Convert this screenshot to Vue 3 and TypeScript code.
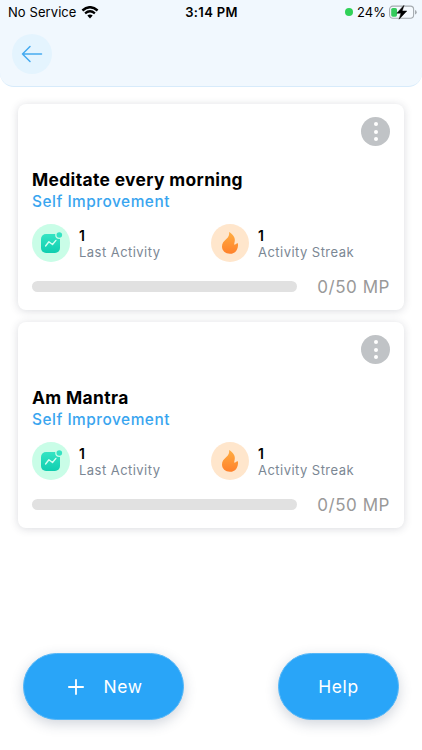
<script setup lang="ts">
interface Habit {
  title: string
  category: string
  lastActivity: number
  streak: number
  points: number
  goal: number
}

const habits: Habit[] = [
  { title: 'Meditate every morning', category: 'Self Improvement', lastActivity: 1, streak: 1, points: 0, goal: 50 },
  { title: 'Am Mantra', category: 'Self Improvement', lastActivity: 1, streak: 1, points: 0, goal: 50 },
]
</script>

<template>
  <div class="screen">
    <header class="header">
      <div class="status">
        <div class="carrier">
          <span class="carrier-name">No Service</span>
          <svg class="wifi" width="18" height="13" viewBox="0 0 18 13">
            <path d="M1.4 4.5Q9-2.1 16.6 4.5" fill="none" stroke="#000" stroke-width="2.4" />
            <path d="M4.1 7.3Q9 3.1 13.9 7.3" fill="none" stroke="#000" stroke-width="2.3" />
            <path d="M6.3 9.6Q9 7.5 11.7 9.6L9 12.4Z" fill="#000" />
          </svg>
        </div>
        <span class="time">3:14 PM</span>
        <div class="power">
          <i class="live"></i>
          <span class="percent">24%</span>
          <svg class="battery" width="28" height="15" viewBox="0 0 28 15">
            <rect x=".6" y="1.1" width="24" height="12.2" rx="3.2" fill="#f5fafe" stroke="#a5abb0" stroke-width="1.1" />
            <path d="M26 5q1.7.4 1.7 2.3T26 9.6Z" fill="#a5abb0" />
            <rect x="2.2" y="2.9" width="5.8" height="8.8" rx="1.6" fill="#34ca5c" />
            <path d="M14.9.4 7.8 8.2h4.2l-1.9 6 7.7-8.2h-4.6Z" fill="#000" stroke="#000" stroke-width=".5" />
          </svg>
        </div>
      </div>
      <button class="back" aria-label="Back">
        <svg width="22" height="18" viewBox="0 0 22 18">
          <path d="M20.5 9H1.5M9 1.5 1.5 9 9 16.5" fill="none" stroke="#45aaf0" stroke-width="1.5" stroke-linecap="round" stroke-linejoin="round" />
        </svg>
      </button>
    </header>

    <main class="list">
      <article v-for="habit in habits" :key="habit.title" class="card">
        <button class="more" aria-label="More"><i></i><i></i><i></i></button>
        <h2 class="title">{{ habit.title }}</h2>
        <p class="category">{{ habit.category }}</p>
        <div class="stats">
          <div class="stat">
            <div class="badge green">
              <svg width="38" height="38" viewBox="0 0 38 38">
                <defs>
                  <linearGradient id="mint" x1="0" y1="0" x2="0" y2="1">
                    <stop offset="0" stop-color="#35e4c3" />
                    <stop offset="1" stop-color="#0fceb0" />
                  </linearGradient>
                </defs>
                <rect x="9" y="10" width="19" height="19" rx="5" fill="url(#mint)" />
                <circle cx="27.3" cy="11" r="4.1" fill="#c9fde7" />
                <circle cx="27.3" cy="11" r="2.8" fill="#35e3c3" />
                <path d="m13.6 22 3.3-4.2 3.6 2.7 3.4-4.1" fill="none" stroke="#d5fff1" stroke-width="1.4" stroke-linecap="round" stroke-linejoin="round" />
              </svg>
            </div>
            <div class="stat-text">
              <strong>{{ habit.lastActivity }}</strong>
              <span>Last Activity</span>
            </div>
          </div>
          <div class="stat">
            <div class="badge orange">
              <svg width="38" height="38" viewBox="0 0 38 38">
                <defs>
                  <linearGradient id="flame" x1="0" y1="0" x2="0" y2="1">
                    <stop offset="0" stop-color="#ffad42" />
                    <stop offset="1" stop-color="#ff812b" />
                  </linearGradient>
                </defs>
                <path d="M18.1 8c4.5 2.9 6.7 6.3 5.4 10.6-.3 1.2-.4 2 .1 2.2.8.2 1.2-1.6 3.4-1.6.5 6.3-2.7 10.6-8 10.6-4.7 0-8-3-8-7.2 0-3.4 1.8-5.2 4.3-7.5 2.4-2.3 3.2-4 2.8-7.1Z" fill="url(#flame)" />
              </svg>
            </div>
            <div class="stat-text">
              <strong>{{ habit.streak }}</strong>
              <span>Activity Streak</span>
            </div>
          </div>
        </div>
        <div class="progress">
          <div class="track"><div class="fill" :style="{ width: (habit.points / habit.goal) * 100 + '%' }"></div></div>
          <span class="points">{{ habit.points }}/{{ habit.goal }} MP</span>
        </div>
      </article>
    </main>

    <footer class="actions">
      <button class="pill new">
        <svg width="16" height="16" viewBox="0 0 16 16">
          <path d="M8 .9v14.2M.9 8h14.2" stroke="#fff" stroke-width="1.8" stroke-linecap="round" />
        </svg>
        <span>New</span>
      </button>
      <button class="pill help"><span>Help</span></button>
    </footer>
  </div>
</template>

<style>
body {
  background: #fff;
}
</style>

<style scoped>
.screen {
  box-sizing: border-box;
  display: flex;
  flex-direction: column;
  width: 422px;
  height: 750px;
  overflow: hidden;
  background: #fff;
  color: #000;
  font-family: Inter, "Liberation Sans", sans-serif;
}
button {
  box-sizing: border-box;
  display: flex;
  align-items: center;
  justify-content: center;
  margin: 0;
  padding: 0;
  border: 0;
  font-family: inherit;
}
.header {
  box-sizing: border-box;
  flex: none;
  height: 87px;
  border-bottom: 1px solid #d7ebfb;
  border-radius: 0 0 14px 14px;
  background: #f1f8fe;
}
.status {
  display: grid;
  grid-template-columns: 1fr auto 1fr;
  align-items: center;
  height: 24px;
  padding: 0 5px 0 8px;
  font-size: 13px;
  line-height: 24px;
}
.carrier,
.power {
  display: flex;
  align-items: center;
}
.carrier {
  gap: 5px;
}
.carrier-name {
  letter-spacing: 0.08px;
}
.wifi {
  margin-left: -1px;
}
.time {
  margin-right: 2px;
  font-weight: 600;
  letter-spacing: 0.32px;
}
.power {
  justify-content: flex-end;
}
.live {
  width: 8px;
  height: 8px;
  margin-right: 4px;
  border-radius: 50%;
  background: #30d158;
}
.percent {
  margin-right: 3px;
}
.back {
  width: 40px;
  height: 40px;
  margin: 10px 0 0 12px;
  border-radius: 50%;
  background: #e4f4fe;
}
.list {
  display: flex;
  flex-direction: column;
  gap: 12px;
  padding: 17px 18px 0;
}
.card {
  box-sizing: border-box;
  display: flex;
  flex-direction: column;
  height: 206px;
  padding: 13px 14px 0;
  border-radius: 8px;
  background: #fff;
  box-shadow: 0 1px 8px rgba(50, 55, 75, 0.18);
}
.more {
  align-self: flex-end;
  flex-direction: column;
  gap: 3.4px;
  width: 29px;
  height: 29px;
  border-radius: 50%;
  background: #c0c3c6;
}
.more i {
  width: 4px;
  height: 4px;
  border-radius: 50%;
  background: #fff;
}
.title {
  margin: 23px 0 0;
  font-size: 17.4px;
  font-weight: 700;
  line-height: 22px;
  letter-spacing: 0.36px;
  white-space: nowrap;
}
.category {
  margin: 0;
  color: #39a5ef;
  font-size: 15.4px;
  font-weight: 500;
  line-height: 22px;
  letter-spacing: 0.52px;
}
.stats {
  display: grid;
  grid-template-columns: 179px 1fr;
  margin-top: 11px;
}
.stat {
  display: flex;
  gap: 9px;
}
.badge {
  width: 38px;
  height: 38px;
  border-radius: 50%;
}
.badge svg {
  display: block;
}
.green {
  background: #c9fde7;
}
.orange {
  background: #ffe6cc;
}
.stat-text {
  display: flex;
  flex-direction: column;
  padding-top: 4px;
}
.stat-text strong {
  font-size: 14px;
  font-weight: 600;
  line-height: 16px;
}
.stat-text span {
  color: #7b8794;
  font-size: 13px;
  line-height: 16px;
  letter-spacing: 0.46px;
  white-space: nowrap;
}
.progress {
  display: flex;
  align-items: center;
  justify-content: space-between;
  height: 24px;
  margin-top: 12px;
}
.track {
  width: 265px;
  height: 11px;
  overflow: hidden;
  border-radius: 6px;
  background: #e1e1e1;
}
.fill {
  height: 100%;
  background: #2aa5f8;
}
.points {
  padding-top: 1px;
  color: #999;
  font-size: 17px;
  line-height: 24px;
  letter-spacing: 0.55px;
  white-space: nowrap;
}
.actions {
  display: flex;
  justify-content: space-between;
  margin-top: auto;
  padding: 0 23px 30px;
}
.pill {
  height: 67px;
  border: 1px solid #55b7f8;
  border-radius: 34px;
  background: #29a5f8;
  box-shadow: 0 4px 13px rgba(45, 65, 95, 0.22);
  color: #fff;
  font-size: 17.4px;
  font-weight: 400;
  letter-spacing: 0.6px;
}
.new {
  gap: 20px;
  width: 161px;
  padding-left: 3px;
}
.help {
  width: 121px;
}
</style>
